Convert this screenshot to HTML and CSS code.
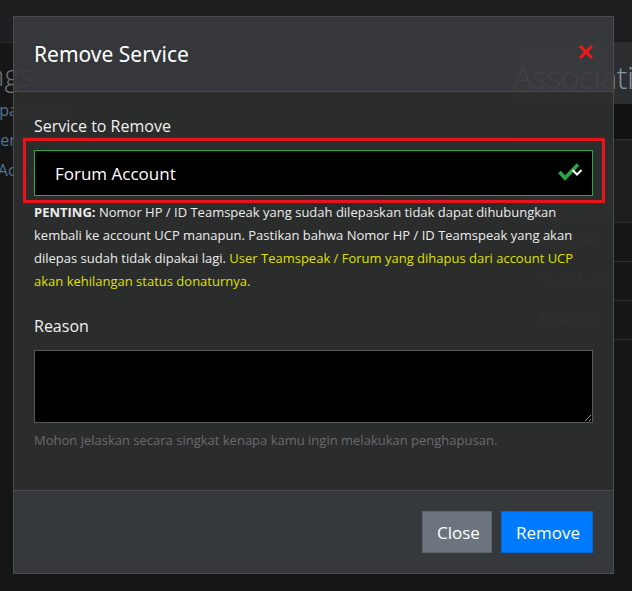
FILE: index.html
```html
<!DOCTYPE html>
<html lang="id">
<head>
  <meta charset="UTF-8">
  <title>Remove Service</title>
  <link rel="stylesheet" href="styles.css">
</head>
<body>

  <div class="topbar"></div>

  <div class="page">
    <div class="side">
      <h2>Settings</h2>
      <a href="#">Atur password</a>
      <a href="#">Poin emas</a>
      <a href="#">Link Account</a>
    </div>
    <div class="main"></div>
    <div class="assoc">
      <h2>Association</h2>
      <div class="row row-dark"></div>
      <div class="row row-tall"></div>
      <div class="row"><span>Number</span></div>
      <div class="row"><span>Sudah dil</span></div>
      <div class="row"><span>Discord</span></div>
      <div class="row"></div>
    </div>
  </div>

  <div class="modal">
    <div class="modal-header">
      <h3>Remove Service</h3>
      <svg class="x" width="14" height="14" viewBox="0 0 14 14">
        <path d="M2 2 L12 12 M12 2 L2 12" stroke="#f01a1a" stroke-width="3" stroke-linecap="square"/>
      </svg>
    </div>

    <div class="modal-body">
      <label class="lbl">Service to Remove</label>
      <div class="mark">
        <div class="select">
          <span>Forum Account</span>
          <svg class="icons" width="27" height="18" viewBox="0 0 27 18">
            <path d="M2.5 9 L8 15 L21 1.5" fill="none" stroke="#28a745" stroke-width="3.6"/>
            <path d="M15.5 7 L20 11.5 L24.5 7" fill="none" stroke="#fff" stroke-width="2"/>
          </svg>
        </div>
      </div>

      <p class="note">
        <b>PENTING:</b> Nomor HP / ID Teamspeak yang sudah dilepaskan tidak dapat dihubungkan<br>
        kembali ke account UCP manapun. Pastikan bahwa Nomor HP / ID Teamspeak yang akan<br>
        dilepas sudah tidak dipakai lagi. <span class="warn">User Teamspeak / Forum yang dihapus dari account UCP<br>
        akan kehilangan status donaturnya.</span>
      </p>

      <label class="lbl reason">Reason</label>
      <textarea class="area"></textarea>
      <div class="help">Mohon jelaskan secara singkat kenapa kamu ingin melakukan penghapusan.</div>
    </div>

    <div class="modal-footer">
      <button class="btn btn-grey">Close</button>
      <button class="btn btn-blue">Remove</button>
    </div>
  </div>

</body>
</html>
```

FILE: styles.css
```css
body {
  margin: 0;
  background: #161616;
  font-family: "Open Sans", "Noto Sans", sans-serif;
  color: #e8e8e8;
  overflow: hidden;
  height: 591px;
}

.topbar {
  height: 42px;
  background: #1e1f21;
  border-bottom: 1px solid #2a2b2d;
}

.page {
  display: flex;
  margin-left: -104px;
}

.side {
  width: 137px;
  flex-shrink: 0;
  display: flex;
  flex-direction: column;
}

.side h2 {
  margin: 10px 0 -2px 0;
  font-weight: 300;
  font-size: 29px;
  line-height: 44px;
  color: #6f7477;
  text-align: right;
  white-space: nowrap;
}

.side a {
  color: #4f7592;
  text-decoration: none;
  font-size: 16px;
  line-height: 30px;
  padding-left: 67px;
  white-space: nowrap;
}

.main {
  width: 480px;
  flex-shrink: 0;
}

.assoc {
  flex: 1;
  min-width: 0;
}

.assoc h2 {
  margin: 0;
  height: 60px;
  padding-top: 12px;
  box-sizing: border-box;
  background: #2c2e30;
  font-weight: 300;
  font-size: 32px;
  letter-spacing: -0.5px;
  color: #8496a0;
  white-space: nowrap;
}

.row {
  height: 38px;
  border-top: 1px solid #2e2e2e;
  padding-left: 27px;
  font-size: 16px;
  line-height: 34px;
  color: #7d8286;
  white-space: nowrap;
}

.row-dark {
  height: 35px;
  background: #121212;
}

.row-tall {
  height: 82px;
  background: #1e1e1e;
}

/* modal */

.modal {
  position: absolute;
  left: 13px;
  top: 16px;
  width: 599px;
  border: 1px solid #4a4b4c;
}

.modal-header {
  height: 74px;
  padding: 0 20px;
  display: flex;
  align-items: center;
  justify-content: space-between;
  background: rgba(56, 59, 62, 0.92);
  border-bottom: 1px solid #4a4b4c;
}

.modal-header h3 {
  margin: 0;
  font-family: "Noto Sans", sans-serif;
  font-weight: 400;
  font-size: 21px;
  color: #fff;
}

.x {
  margin-top: -5px;
}

.modal-body {
  background: rgba(44, 45, 45, 0.97);
  padding: 22px 20px 40px 20px;
}

.lbl {
  display: block;
  font-size: 16px;
  line-height: 24px;
  color: #f0f0f0;
}

.mark {
  margin: 0 -12px 0 -11px;
  padding: 9px 9px 4px 8px;
  border: 3px solid #e8141c;
}

.select {
  height: 46px;
  box-sizing: border-box;
  background: #000;
  border: 1px solid #28a745;
  padding: 0 8px 0 20px;
  display: flex;
  align-items: center;
  justify-content: space-between;
  font-size: 17px;
  color: #fff;
}

.icons {
  margin-top: -2px;
}

.note {
  margin: -2px 0 0 0;
  font-size: 13px;
  line-height: 23px;
  color: #ececec;
  white-space: nowrap;
}

.note b {
  font-weight: 700;
}

.warn {
  color: #dfe000;
}

.reason {
  margin-top: 21px;
}

.area {
  display: block;
  box-sizing: border-box;
  width: 100%;
  height: 73px;
  margin-top: 12px;
  background: #000;
  border: 1px solid #55585a;
  border-radius: 0;
  color: #fff;
}

.help {
  margin-top: 7px;
  font-size: 13px;
  line-height: 20px;
  color: #666c70;
}

.modal-footer {
  background: rgba(56, 59, 62, 0.97);
  border-top: 1px solid #4a4b4c;
  padding: 20px;
  display: flex;
  justify-content: flex-end;
  gap: 9px;
}

.btn {
  height: 42px;
  border: 1px solid rgba(0, 0, 0, 0.15);
  border-radius: 0;
  font-family: "Open Sans", "Noto Sans", sans-serif;
  font-size: 17px;
  color: #fff;
  padding: 0 14px;
  cursor: pointer;
}

.btn-grey {
  background: #6c757d;
  width: 70px;
}

.btn-blue {
  background: #007bff;
  width: 92px;
}
```
